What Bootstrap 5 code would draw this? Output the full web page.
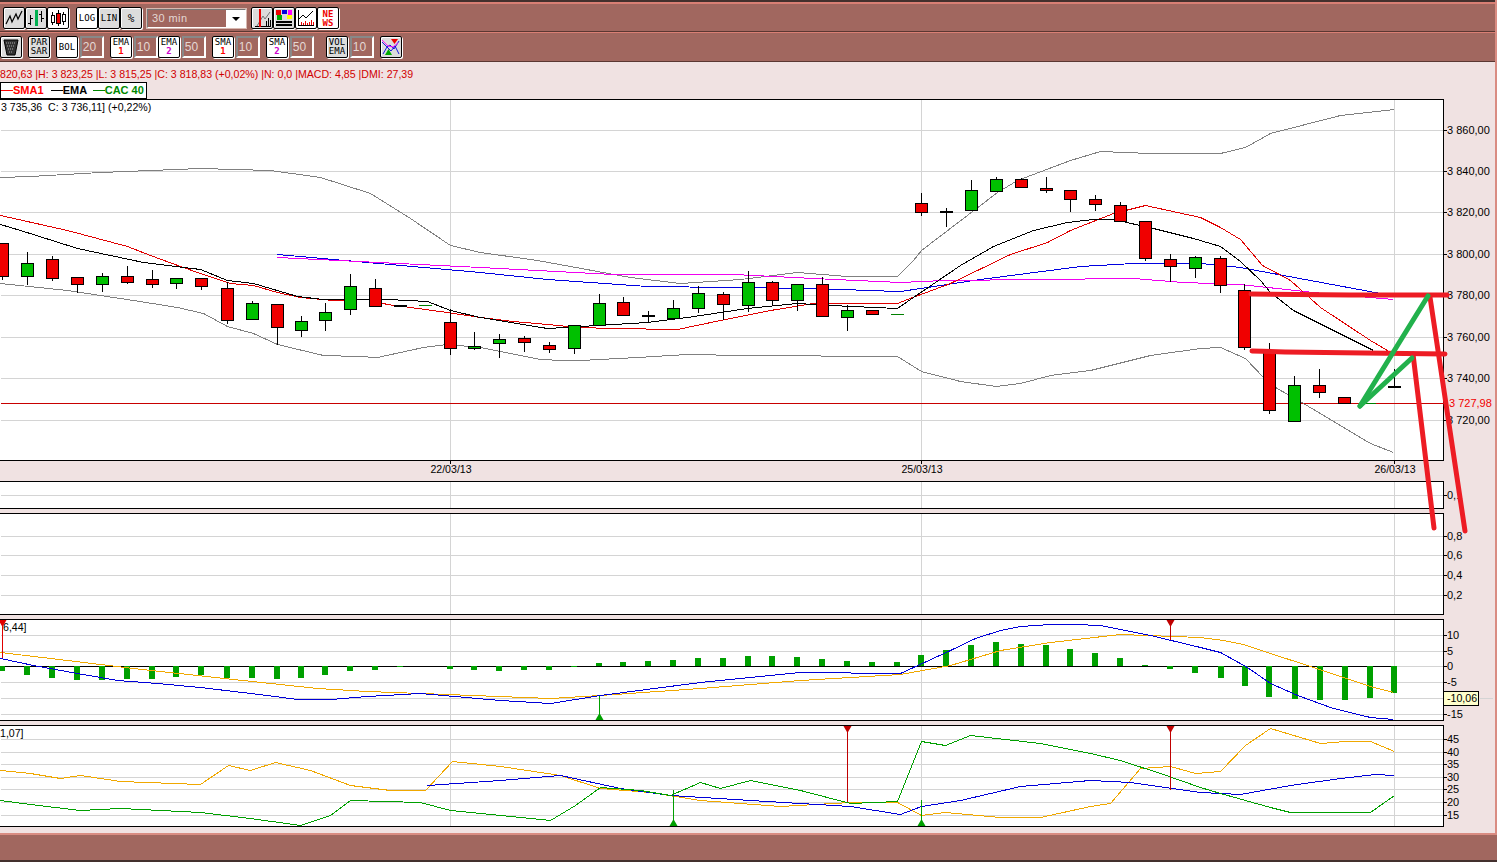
<!DOCTYPE html>
<html lang="en">
<head>
    <meta charset="UTF-8">
    <title>CAC 40 - 30 min</title>
    <link href="https://cdn.jsdelivr.net/npm/bootstrap@5.3.0/dist/css/bootstrap.min.css" rel="stylesheet">
    <style>
        html, body { height: 862px; overflow: hidden; }
        body {
            background: #f0e2e2;
            font-family: "Liberation Sans", Arial, sans-serif;
            font-size: 11px;
            color: #000;
        }
        .app-shell { height: 862px; border-right: 2px solid #d98c82; }
        .tool-bar {
            background: #a1675f;
            border-top: 1px solid #d97f74;
            border-bottom: 1px solid #5b3732;
        }
        .bar-one { height: 30px; padding: 3px 0 0 3px; border-top: 2px solid #d97f74; box-shadow: 0 -2px 0 #43302d; margin-top: 2px; }
        .bar-two { height: 30px; padding: 3px 0 0 0; }
        .tbtn {
            width: 22px; height: 22px; padding: 0; flex: none;
            background: #dcdcdc;
            border: 1px solid #000;
            border-radius: 2px;
            box-shadow: inset 1px 1px 0 #fff, 1px 1px 0 #fff;
            font-family: "DejaVu Sans Mono", monospace;
            font-size: 9px;
            line-height: 9px;
            color: #000;
            display: flex; flex-direction: column; align-items: center; justify-content: center;
        }
        .tbtn.is-on { background: #fff; }
        .tbtn svg { display: block; }
        .tbtn .col-red { color: #f00; font-weight: 700; }
        .tbtn .col-pur { color: #c0c; font-weight: 700; }
        .tbtn .pct-sign { font-size: 11px; }
        .sp-2 { margin-left: 2px; }
        .sp-5 { margin-left: 5px; }
        .sp-6 { margin-left: 6px; }
        .sp-7 { margin-left: 7px; }
        .sp-12 { margin-left: 12px; }
        .num-box {
            width: 24px; height: 22px; flex: none;
            background: #a1675f;
            border: 2px solid;
            border-color: #888 #fff #fff #888;
            color: #e4d8d4;
            font-size: 12px; line-height: 18px; text-align: center;
            padding-right: 5px;
        }
        .period-box {
            width: 99px; height: 19px; flex: none; margin-top: 2px;
            background: #a1675f;
            border: 1px solid;
            border-color: #777 #fff #fff #777;
            outline: 1px solid #d8b8b0;
            color: #e4d8d4;
            font-size: 11px; line-height: 17px; letter-spacing: .4px;
        }
        .period-arrow { width: 19px; background: #fff; }
        .down-tri { width: 0; height: 0; border-left: 4px solid transparent; border-right: 4px solid transparent; border-top: 4px solid #000; }
        .info-row { height: 20px; padding-top: 4px; color: #d00000; font-size: 10.6px; line-height: 16px; white-space: nowrap; }
        .legend-row { height: 17px; }
        .legend-box {
            width: 147px; height: 17px;
            background: #fff; border: 1px solid #000;
            font-size: 11px; font-weight: 700; line-height: 15px; white-space: nowrap;
        }
        .lg-dash { display: inline-block; width: 12px; height: 1px; vertical-align: 3px; }
        .lg-red { color: #f00; }
        .lg-green { color: #080; }
        .dash-red { background: #f00; }
        .dash-black { background: #000; margin-left: 4px; }
        .dash-green { background: #080; margin-left: 3px; }
        .chart-panel { display: block; width: 1495px; flex: none; }
        .chart-panel text { font-family: "Liberation Sans", Arial, sans-serif; font-size: 11px; fill: #000; }
        .chart-panel .small-txt { font-size: 10.6px; }
        .chart-panel .price-txt { fill: #f00000; }
        .ad-panel { margin-top: 3px; }
        .foot-bar {
            height: 29px;
            background: #a1675f;
            border-top: 2px solid #d98c82;
            border-bottom: 2px solid #43302d;
            margin-right: -2px;
        }
        .pen-layer { left: 0; top: 0; pointer-events: none; }
    </style>
</head>
<body>
<div class="app-shell d-flex flex-column position-relative">
    <div class="tool-bar bar-one d-flex align-items-start">
        <div class="tbtn"><svg width="20" height="20" viewBox="0 0 20 20"><path d="M2 16 6 8 8 14 12 6 14 11 18 3" fill="none" stroke="#000" stroke-width="1.2"/></svg></div>
        <div class="tbtn"><svg width="20" height="20" viewBox="0 0 20 20" shape-rendering="crispEdges"><path d="M4.5 7V17M2 15H4.5M4.5 10H7M15.5 3V14M13 6H15.5M15.5 10H18" stroke="#000" fill="none"/><path d="M10 2V18" stroke="#00b050" stroke-width="3"/></svg></div>
        <div class="tbtn is-on"><svg width="20" height="20" viewBox="0 0 20 20" shape-rendering="crispEdges"><path d="M4.5 4V17M15.5 4V17" stroke="#000"/><rect x="3" y="7" width="3" height="7" fill="#fff" stroke="#000"/><rect x="14" y="6" width="3" height="7" fill="#fff" stroke="#000"/><path d="M10 2V18" stroke="#000"/><rect x="8" y="5" width="4" height="10" fill="#e00" stroke="#000"/></svg></div>
        <div class="tbtn is-on sp-7">LOG</div>
        <div class="tbtn">LIN</div>
        <div class="tbtn"><span class="pct-sign">%</span></div>
        <div class="period-box d-flex justify-content-between sp-5"><span class="ps-1">30 min</span><span class="period-arrow d-flex align-items-center justify-content-center"><span class="down-tri"></span></span></div>
        <div class="tbtn sp-5"><svg width="20" height="20" viewBox="0 0 20 20" shape-rendering="crispEdges"><path d="M3 18H19" stroke="#000"/><path d="M5 18 11 8 13 11 18 4" fill="none" stroke="#777" shape-rendering="auto"/><path d="M14 18V13M16 18V10M18 18V12" stroke="#000"/><path d="M8 1V19" stroke="#e00" stroke-width="2"/></svg></div>
        <div class="tbtn"><svg width="20" height="20" viewBox="0 0 20 20" shape-rendering="crispEdges"><rect x="2" y="2" width="5" height="5" fill="#e00"/><rect x="8" y="2" width="5" height="4" fill="#00d"/><rect x="14" y="2" width="4" height="5" fill="#f0f"/><rect x="3" y="7" width="5" height="5" fill="#0a0"/><rect x="13" y="7" width="5" height="4" fill="#ff0"/><path d="M2 14H18M2 17H18" stroke="#000" stroke-width="1.4"/></svg></div>
        <div class="tbtn is-on"><svg width="20" height="20" viewBox="0 0 20 20" shape-rendering="crispEdges"><path d="M2 2V17H18" fill="none" stroke="#000"/><path d="M3 11 7 7 10 10 17 3" fill="none" stroke="#000" shape-rendering="auto"/><path d="M5 17V14M7 17V15M9 17V13M11 17V15M13 17V14M15 17V12M17 17V14" stroke="#e00"/></svg></div>
        <div class="tbtn is-on"><svg width="20" height="20" viewBox="0 0 20 20"><text x="10" y="9" text-anchor="middle" font-family="DejaVu Sans Mono, monospace" font-size="9" font-weight="700" fill="#e00">NE</text><text x="10" y="18" text-anchor="middle" font-family="DejaVu Sans Mono, monospace" font-size="9" font-weight="700" fill="#e00">WS</text></svg></div>
    </div>
    <div class="tool-bar bar-two d-flex align-items-start">
        <div class="tbtn"><svg width="20" height="20" viewBox="0 0 20 20"><path d="M3 3H17L14 18H6Z" fill="#333" stroke="#000"/><path d="M5 6H15M6 9H14M7 12H13M8 15H12" stroke="#aaa" stroke-dasharray="1 1"/></svg></div>
        <div class="tbtn sp-6"><span>PAR</span><span>SAR</span></div>
        <div class="tbtn is-on sp-6">BOL</div>
        <div class="num-box sp-2">20</div>
        <div class="tbtn is-on sp-6"><span>EMA</span><span class="col-red">1</span></div>
        <div class="num-box sp-2">10</div>
        <div class="tbtn is-on"><span>EMA</span><span class="col-pur">2</span></div>
        <div class="num-box sp-2">50</div>
        <div class="tbtn is-on sp-6"><span>SMA</span><span class="col-red">1</span></div>
        <div class="num-box sp-2">10</div>
        <div class="tbtn is-on sp-6"><span>SMA</span><span class="col-pur">2</span></div>
        <div class="num-box sp-2">50</div>
        <div class="tbtn sp-12"><span>VOL</span><span>EMA</span></div>
        <div class="num-box sp-2">10</div>
        <div class="tbtn sp-6"><svg width="20" height="20" viewBox="0 0 20 20"><path d="M1 5 6 10 9 8 13 12 18 4M2 17 6 10 10 14 14 9 18 17" fill="none" stroke="#00d" stroke-width=".9"/><path d="M1 3 7 9 12 10 17 6" fill="none" stroke="#f0f" stroke-width=".9"/><path d="M10 2H17L13.5 7Z" fill="#e00"/><path d="M4 18H11L7.5 12Z" fill="#0a0"/></svg></div>
    </div>
    <div class="info-row">820,63 |H: 3 823,25 |L: 3 815,25 |C: 3 818,83 (+0,02%) |N: 0,0 |MACD: 4,85 |DMI: 27,39</div>
    <div class="legend-row">
        <div class="legend-box"><span class="lg-dash dash-red"></span><span class="lg-red">SMA1</span> <span class="lg-dash dash-black"></span>EMA <span class="lg-dash dash-green"></span><span class="lg-green">CAC 40</span></div>
    </div>
    <svg id="pMain" class="chart-panel" height="382" viewBox="0 99 1495 382"></svg>
    <svg id="pVol" class="chart-panel" height="29" viewBox="0 481 1495 29"></svg>
    <svg id="pAd" class="chart-panel ad-panel" height="102" viewBox="0 513 1495 102"></svg>
    <svg id="pMacd" class="chart-panel mt-1" height="102" viewBox="0 619 1495 102"></svg>
    <svg id="pDmi" class="chart-panel mt-1" height="102" viewBox="0 725 1495 102"></svg>
    <div class="foot-bar mt-auto"></div>

    <!-- hand drawn trend lines over the chart -->
    <svg class="pen-layer position-absolute" width="1497" height="862" fill="none" stroke-linecap="round">
        <g stroke="#ed1c24" stroke-width="5">
            <path d="M1251 294 1350 295 1447 295"/>
            <path d="M1252 351 1285 352 1445 354"/>
            <path d="M1430 297 1465 531"/>
            <path d="M1413 354 1434 528"/>
        </g>
        <g stroke="#22b14c" stroke-width="5">
            <path d="M1360 406 1428 296"/>
            <path d="M1360 406 1412 358"/>
        </g>
    </svg>
</div>
<script>
    var RED = '#f00000', GREEN = '#00c000', GRID = '#d4d4d4';
    var VLINES = [450, 921, 1394];

    // [x, colour, high, bodyTop, bodyBottom, low] in page pixels
    var candles = [
        [2,'r',243,243,276,279],[27,'g',252,263,276,284],[52,'r',256,259,278,280],[77,'r',277,277,284,292],
        [102,'g',273,276,284,291],[127,'r',266,276,282,283],[152,'r',270,279,284,287],[176,'g',278,278,283,288],
        [201,'r',278,278,286,289],[227,'r',282,288,320,323],[252,'g',301,303,319,319],[277,'r',304,304,327,344],
        [301,'g',316,321,330,336],[325,'g',303,312,320,330],[350,'g',274,286,309,314],[375,'r',279,288,306,306],
        [400,'k',305,305,306,306],[450,'r',309,322,348,354],[474,'g',332,346,348,349],
        [499,'g',334,339,343,357],[524,'r',336,338,342,351],[549,'r',342,345,349,352],[574,'g',325,325,348,353],
        [599,'g',294,303,325,325],[623,'r',297,302,315,315],[648,'k',311,315,316,322],[673,'g',300,308,318,319],
        [698,'g',286,293,308,312],[723,'r',292,294,304,319],[748,'g',271,282,305,311],[772,'r',281,282,300,305],
        [797,'g',284,284,300,310],[822,'r',277,284,316,316],[847,'g',305,310,317,330],[872,'r',310,310,314,314],
        [921,'r',193,203,212,215],[946,'k',208,211,212,226],[971,'g',180,190,210,210],[996,'g',177,179,191,191],
        [1021,'r',178,179,187,187],[1046,'r',177,188,190,192],[1070,'r',190,190,199,211],[1095,'r',195,199,204,210],
        [1120,'r',202,205,221,221],[1145,'r',221,221,258,260],[1170,'r',254,259,266,281],[1195,'g',256,257,268,277],
        [1220,'r',256,258,285,292],[1244,'r',284,290,347,349],[1269,'r',343,352,410,413],[1294,'g',376,385,421,421],
        [1319,'r',369,385,392,397],[1344,'r',397,397,403,403],[1394,'k',369,386,387,387]
    ];
    var lines = {
        bolUp: [[0,177],[30,176],[100,172],[200,168],[270,170],[320,177],[370,193],[410,218],[450,245],[480,252],[537,260],[630,277],[680,283],[740,279],[797,272],[847,276],[897,276],[913,260],[921,250],[997,192],[1017,180],[1070,160],[1100,151],[1150,153],[1220,153],[1245,147],[1270,133],[1340,115],[1394,109]],
        bolDn: [[0,283],[67,290],[133,300],[177,307],[203,313],[227,326],[253,333],[277,344],[323,355],[357,356],[377,357],[423,347],[447,344],[480,347],[540,359],[563,360],[580,360],[637,357],[687,354],[743,355],[897,356],[921,371],[960,381],[996,386],[1020,383],[1050,375],[1090,370],[1150,355],[1200,348],[1220,347],[1245,358],[1263,377],[1275,387],[1303,403],[1370,443],[1393,452]],
        sma: [[0,215],[67,230],[127,246],[150,255],[180,266],[200,273],[230,283],[253,285],[277,292],[300,297],[333,300],[367,299],[387,304],[410,307],[447,312],[480,317],[513,321],[547,324],[577,327],[613,328],[677,329],[720,320],[770,310],[813,303],[897,303],[907,299],[950,283],[1010,254],[1047,242],[1070,230],[1113,213],[1145,205],[1177,212],[1200,217],[1220,227],[1240,239],[1262,265],[1290,280],[1320,307],[1370,340],[1392,353]],
        ema: [[0,224],[20,230],[77,248],[143,262],[200,269],[227,280],[253,283],[297,296],[323,299],[387,299],[427,301],[450,310],[480,317],[547,328],[580,326],[647,322],[687,317],[747,308],[797,303],[830,305],[897,308],[910,299],[960,265],[993,246],[1033,230],[1067,222],[1093,219],[1113,219],[1153,228],[1193,238],[1220,246],[1240,261],[1260,280],[1270,292],[1293,310],[1317,322],[1373,350]],
        blue: [[277,254],[367,262],[480,272],[547,279],[647,286],[813,288],[897,291],[900,291],[980,279],[1080,266],[1133,263],[1200,263],[1240,267],[1310,280],[1380,293]],
        pink: [[277,257],[480,267],[613,274],[733,274],[813,278],[900,282],[943,280],[1133,278],[1183,282],[1240,284],[1313,292],[1393,299]]
    };
    var macdBars = [[2,671],[27,675],[52,678],[77,680],[102,680],[127,679],[152,679],[176,677],[201,675],[227,678],[252,678],[277,679],[301,678],[325,675],[350,671],[375,670],[400,667],[450,669],[474,670],[499,671],[524,670],[549,670],[574,667],[599,663],[623,662],[648,661],[673,660],[698,658],[723,658],[748,656],[772,656],[797,657],[822,659],[847,661],[872,662],[897,662],[921,655],[946,650],[971,645],[996,642],[1021,644],[1046,645],[1070,649],[1095,653],[1120,658],[1145,665],[1170,669],[1195,673],[1221,678],[1245,686],[1269,697],[1295,699],[1320,700],[1345,700],[1370,698],[1394,693]];
    var macdBlue = [[0,658],[33,665],[77,673],[117,680],[157,683],[200,687],[267,695],[297,699],[330,699],[367,696],[420,693],[500,700],[550,703],[600,695],[700,682],[800,672],[900,673],[950,650],[975,638],[1000,630],[1020,626],[1050,624],[1075,624],[1100,625],[1150,635],[1200,647],[1220,652],[1247,667],[1270,683],[1297,695],[1333,708],[1370,717],[1393,719]];
    var macdOrange = [[0,652],[67,660],[133,668],[233,679],[317,688],[367,691],[420,693],[550,698],[600,695],[700,688],[800,680],[900,674],[950,665],[1000,650],[1050,642],[1120,634],[1200,637],[1223,640],[1243,644],[1270,653],[1307,665],[1343,677],[1370,686],[1393,692]];
    var dmiOrange = [[0,770],[30,773],[60,778],[80,775],[120,781],[200,784],[228,765],[250,770],[275,762],[310,770],[350,785],[390,790],[425,790],[452,761],[500,766],[560,775],[600,788],[650,792],[700,800],[780,806],[850,802],[897,802],[921,815],[945,812],[1000,817],[1040,817],[1090,806],[1110,803],[1140,768],[1170,766],[1195,773],[1220,771],[1245,745],[1270,728],[1320,743],[1345,741],[1370,741],[1394,751]];
    var dmiBlue = [[427,785],[500,780],[560,775],[620,788],[670,795],[750,800],[850,806],[900,814],[921,806],[960,800],[1020,786],[1090,780],[1130,782],[1200,792],[1240,794],[1290,785],[1340,778],[1375,774],[1394,775]];
    var dmiGreen = [[0,800],[30,804],[80,810],[120,808],[200,812],[250,818],[300,825],[330,815],[350,800],[420,802],[450,810],[500,815],[550,820],[575,805],[600,787],[640,790],[670,795],[700,782],[720,788],[750,780],[800,790],[850,803],[897,801],[921,741],[945,745],[970,735],[1040,743],[1090,753],[1120,760],[1160,773],[1200,787],[1220,793],[1270,807],[1290,812],[1340,812],[1370,812],[1394,795]];

    function line(x1, y1, x2, y2, c) {
        return '<line x1="' + x1 + '" y1="' + y1 + '" x2="' + x2 + '" y2="' + y2 + '" stroke="' + c + '" shape-rendering="crispEdges"/>';
    }
    function poly(pts, c) {
        return '<polyline fill="none" stroke="' + c + '" shape-rendering="crispEdges" points="' + pts.map(function (p) { return (p[0] + .5) + ',' + (p[1] + .5); }).join(' ') + '"/>';
    }
    function label(x, y, t, extra) {
        return '<text x="' + x + '" y="' + (y + 3.5) + '" ' + (extra || '') + '>' + t + '</text>';
    }
    // white plot area with black frame, grid and ticked axis labels
    function frame(top, bottom, ticks) {
        var s = '<rect x="-2" y="' + (top + .5) + '" width="1445.5" height="' + (bottom - top) + '" fill="#fff" stroke="#000" shape-rendering="crispEdges"/>';
        ticks.forEach(function (t) {
            s += line(1, t[0] + .5, 1443, t[0] + .5, GRID) + line(1443, t[0] + .5, 1447, t[0] + .5, '#000');
            s += label(1447, t[0], t[1]);
        });
        VLINES.forEach(function (x) { s += line(x + .5, top + 1, x + .5, bottom, GRID); });
        return s;
    }
    function tri(x, y, dir, c) {
        return '<path d="M' + (x - 3.5) + ' ' + y + 'H' + (x + 4.5) + 'L' + (x + .5) + ' ' + (y + dir * 7) + 'Z" fill="' + c + '"/>';
    }
    function marker(x, y1, y2, c) {
        // y1 is the panel edge holding the triangle, y2 the end of the stem
        return line(x + .5, y1, x + .5, y2, c) + tri(x, y1, y2 > y1 ? 1 : -1, c);
    }

    // main price chart
    var s = frame(99, 460, [[130,'3 860,00'],[171,'3 840,00'],[212,'3 820,00'],[254,'3 800,00'],[295,'3 780,00'],[337,'3 760,00'],[378,'3 740,00'],[420,'3 720,00']]);
    s += line(1, 403.5, 1448, 403.5, '#c80000');
    s += label(1449, 403, '3 727,98', 'class="price-txt"');
    s += label(1, 107, '3 735,36&#160;&#160;C: 3 736,11] (+0,22%)', 'class="small-txt"');
    s += poly(lines.bolUp, '#808080') + poly(lines.bolDn, '#808080');
    s += poly(lines.blue, '#0000e0') + poly(lines.pink, '#f000f0');
    s += poly(lines.sma, '#e00000') + poly(lines.ema, '#000');
    candles.forEach(function (c) {
        var x = c[0], fill = c[1] === 'r' ? RED : c[1] === 'g' ? GREEN : '#000';
        s += line(x + .5, c[2], x + .5, c[5] + 1, '#000');
        if (c[1] === 'k') {
            s += '<rect x="' + (x - 6) + '" y="' + c[3] + '" width="13" height="2" fill="#000" shape-rendering="crispEdges"/>';
        } else {
            s += '<rect x="' + (x - 5.5) + '" y="' + (c[3] + .5) + '" width="12" height="' + (c[4] - c[3]) + '" fill="' + fill + '" stroke="#000" shape-rendering="crispEdges"/>';
        }
    });
    s += line(419, 305.5, 432, 305.5, '#008000');
    s += line(891, 314.5, 904, 314.5, '#008000');
    s += line(1363, 403.5, 1376, 403.5, '#008000');
    [['22/03/13', 450], ['25/03/13', 921], ['26/03/13', 1394]].forEach(function (d) {
        s += line(d[1] + .5, 460, d[1] + .5, 464, '#000');
        s += label(d[1] + 1, 469, d[0], 'text-anchor="middle" class="small-txt"');
    });
    document.getElementById('pMain').innerHTML = s;

    document.getElementById('pVol').innerHTML = frame(481, 508, [[495, '0,1']]);
    document.getElementById('pAd').innerHTML = frame(513, 614, [[536,'0,8'],[555,'0,6'],[575,'0,4'],[595,'0,2']]);

    // MACD
    s = frame(619, 720, [[635,'10'],[651,'5'],[666,'0'],[682,'-5'],[698,''],[714,'-15']]);
    s += line(0, 666.5, 1394, 666.5, '#000');
    macdBars.forEach(function (b) {
        var y = Math.min(666, b[1]), h = Math.abs(b[1] - 666);
        s += '<rect x="' + (b[0] - 3) + '" y="' + y + '" width="6" height="' + h + '" fill="#00a000" shape-rendering="crispEdges"/>';
    });
    s += poly(macdOrange, '#f0a800') + poly(macdBlue, '#0000d8');
    s += marker(2, 620, 658, '#e00000') + marker(1170, 620, 640, '#c00000') + marker(599, 720, 696, '#00a000');
    s += label(3, 627, '6,44]', 'class="small-txt"');
    s += line(1480, 698.5, 1493, 698.5, GRID);
    s += '<rect x="1443.5" y="691.5" width="35" height="14" fill="#ffffcc" stroke="#000" shape-rendering="crispEdges"/>' + label(1447, 698, '-10,06', 'class="small-txt"');
    document.getElementById('pMacd').innerHTML = s;

    // DMI
    s = frame(725, 826, [[739,'45'],[752,'40'],[764,'35'],[777,'30'],[789,'25'],[802,'20'],[815,'15']]);
    s += poly(dmiOrange, '#f0a800') + poly(dmiBlue, '#0000d8') + poly(dmiGreen, '#00a000');
    s += marker(847, 726, 802, '#c00000') + marker(1170, 726, 790, '#c00000') + marker(673, 826, 790, '#00a000') + marker(921, 826, 800, '#00a000');
    s += label(0, 733, '1,07]', 'class="small-txt"');
    document.getElementById('pDmi').innerHTML = s;
</script>
<script src="https://cdn.jsdelivr.net/npm/bootstrap@5.3.0/dist/js/bootstrap.bundle.min.js"></script>
</body>
</html>
